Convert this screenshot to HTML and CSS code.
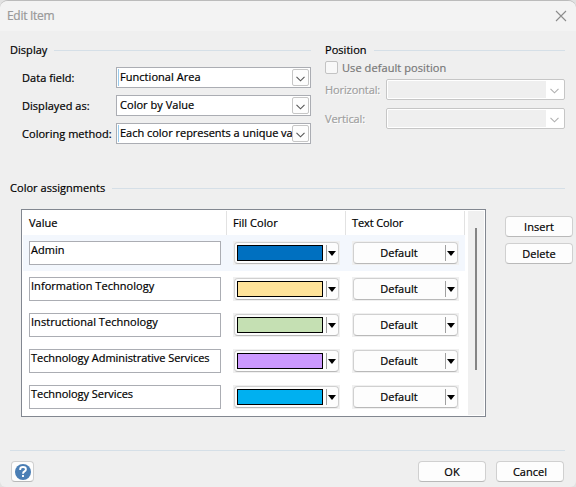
FILE: index.html
```
<!DOCTYPE html>
<html lang="en">
<head>
<meta charset="utf-8">
<title>Edit Item</title>
<link rel="stylesheet" href="styles.css">
</head>
<body>
<div class="dialog">
  <header class="titlebar"><h1>Edit Item</h1>
    <svg class="close" width="12" height="12" viewBox="0 0 12 12"><path d="M1 1l10 10M11 1L1 11"/></svg>
  </header>
  <div class="top">
    <section class="display">
      <h2 class="legend">Display</h2>
      <div class="field"><label>Data field:</label><div class="combo accent"><span>Functional Area</span><i><svg width="9" height="6" viewBox="0 0 9 6"><path d="M.5 .8l4 4 4-4"/></svg></i></div></div>
      <div class="field"><label>Displayed as:</label><div class="combo"><span>Color by Value</span><i><svg width="9" height="6" viewBox="0 0 9 6"><path d="M.5 .8l4 4 4-4"/></svg></i></div></div>
      <div class="field"><label>Coloring method:</label><div class="combo accent"><span class="long">Each color represents a unique value</span><i><svg width="9" height="6" viewBox="0 0 9 6"><path d="M.5 .8l4 4 4-4"/></svg></i></div></div>
    </section>
    <section class="position">
      <h2 class="legend">Position</h2>
      <div class="check"><b></b><span>Use default position</span></div>
      <div class="pfield"><label>Horizontal:</label><div class="combo off"><span></span><i><svg width="9" height="6" viewBox="0 0 9 6"><path d="M.5 .8l4 4 4-4"/></svg></i></div></div>
      <div class="pfield"><label>Vertical:</label><div class="combo off"><span></span><i><svg width="9" height="6" viewBox="0 0 9 6"><path d="M.5 .8l4 4 4-4"/></svg></i></div></div>
    </section>
  </div>
  <h2 class="legend assign">Color assignments</h2>
  <div class="middle">
    <div class="list">
      <div class="rows">
        <div class="head"><span>Value</span><span>Fill Color</span><span>Text Color</span></div>
        <div class="row selected"><div class="input">Admin</div><div class="split"><div><em class="blue"></em><u></u><s></s></div></div><div class="split"><div><span>Default</span><u></u><s></s></div></div></div>
        <div class="row"><div class="input">Information Technology</div><div class="split"><div><em class="yellow"></em><u></u><s></s></div></div><div class="split"><div><span>Default</span><u></u><s></s></div></div></div>
        <div class="row"><div class="input">Instructional Technology</div><div class="split"><div><em class="green"></em><u></u><s></s></div></div><div class="split"><div><span>Default</span><u></u><s></s></div></div></div>
        <div class="row"><div class="input wide">Technology Administrative Services</div><div class="split"><div><em class="purple"></em><u></u><s></s></div></div><div class="split"><div><span>Default</span><u></u><s></s></div></div></div>
        <div class="row"><div class="input wide">Technology Services</div><div class="split"><div><em class="cyan"></em><u></u><s></s></div></div><div class="split"><div><span>Default</span><u></u><s></s></div></div></div>
      </div>
      <div class="scroll"><div class="thumb"></div></div>
    </div>
    <div class="side"><div class="button">Insert</div><div class="button">Delete</div></div>
  </div>
  <footer class="footer">
    <div class="button help"><svg width="16" height="16" viewBox="0 0 16 16"><circle cx="8" cy="8" r="8"/><path d="M5.200 6V5.300C5.200 3.800 6.300 3 8 3s2.900.8 2.900 2.200c0 1.100-.6 1.700-1.400 2.200C8.500 8 8 8.400 8 9.700M8 11v2"/></svg></div>
    <div class="button">OK</div><div class="button">Cancel</div>
  </footer>
</div>
</body>
</html>
```
FILE: styles.css
```
* { box-sizing: border-box; }
body { margin: 0; width: 576px; height: 487px; overflow: hidden; background: #e2e2e2; color: #000; font: 11px/16px "Open Sans", "Noto Sans", sans-serif; letter-spacing: .04px; -webkit-text-stroke: .2px; white-space: nowrap; }
h1, h2 { margin: 0; font: inherit; }
i, em, u, s, b { display: block; }
svg { display: block; fill: none; stroke: #555; stroke-width: 1.1; }
.dialog { height: 487px; overflow: hidden; background: #efefef; border-top: 1px solid #bbb; border-radius: 8px 8px 6px 6px; }
.titlebar { height: 30px; padding: 0 9px 0 7px; display: flex; align-items: center; justify-content: space-between; background: #f3f3f3; }
.titlebar h1 { font-size: 12px; letter-spacing: -.3px; color: #999; }
.close { stroke: #8c8c8c; }
.top { display: flex; gap: 14px; height: 149px; padding: 11px 11px 0 10px; }
.display { width: 301px; }
.position { width: 240px; }
.legend { height: 16px; display: flex; align-items: center; gap: 7px; }
.legend::after { content: ""; flex: 1; height: 1px; background: #d5dfe7; }
.display .legend { margin-bottom: 9px; }
.field { display: flex; height: 21px; margin: 0 0 7px 12px; }
.field label { width: 94px; padding-top: 3px; }
.combo { width: 195px; height: 21px; border: 1px solid #abadb3; background: #fff; display: flex; padding: 1px; }
.combo span { flex: 1; min-width: 0; overflow: hidden; line-height: 16px; padding-left: 2px; }
.combo.accent span { border-left: 1px solid #99ccee; padding-left: 1px; }
.combo .long { letter-spacing: -.02px; }
.combo i { width: 17px; height: 17px; border: 1px solid #c6c6c6; border-radius: 2px; background: #fdfdfd; display: flex; align-items: center; justify-content: center; }
.combo i svg { margin-top: 2px; }
.check { height: 13px; margin: 3px 0 5px; display: flex; align-items: center; color: #787878; gap: 4px; }
.check span { letter-spacing: .08px; }
.check b { width: 13px; height: 13px; border: 1px solid #c3c3c3; border-radius: 2px; background: #f8f8f8; }
.pfield { display: flex; height: 21px; margin-bottom: 8px; color: #a0a0a0; text-shadow: 1px 1px #fff; }
.pfield label { width: 61px; padding-top: 3px; letter-spacing: -.1px; }
.combo.off { width: 179px; border-color: #c6c6c6; border-radius: 2px; }
.off span { background: #efefef; }
.off i { width: 17px; border: 0; background: #fff; }
.off svg { stroke: #b0b0b0; }
.assign { margin: 0 11px 0 10px; }
.middle { display: flex; gap: 19px; padding: 13px 0 0 21px; }
.list { width: 465px; height: 208px; border: 1px solid #828790; padding: 1px; background: #fff; display: flex; justify-content: space-between; }
.rows { width: 442px; }
.head { height: 24px; display: grid; grid-template-columns: 204px 119px 119px; }
.head span { border-right: 1px solid #e2e2e2; padding: 4px 0 0 6px; }
.head span:last-child { letter-spacing: -.1px; }
.row { height: 36px; padding: 6px; display: grid; grid-template-columns: 192px 107px 107px; gap: 12px; }
.selected { background: #f3f7fd; }
.input { height: 24px; border: 1px solid #abadb3; background: #fff; padding: 0 0 0 1px; }
.wide { letter-spacing: -.05px; }
.split { height: 24px; padding: 1px; background: #f0f0f0; }
.split div { height: 22px; display: flex; align-items: center; padding-left: 2px; }
.split div, .button { border: 1px solid #d0d0d0; border-bottom-color: #b9b9b9; border-radius: 4px; background: #fdfdfd; }
.split em { width: 86px; height: 16px; border: 1px solid #000; margin-right: 3px; }
.split span { width: 86px; margin-right: 3px; text-align: center; }
.split u { width: 1px; height: 16px; background: #a0a0a0; margin-right: 1px; }
.split s { border: solid transparent; border-width: 5px 4.500px 0; border-top-color: #000; margin-top: 1px; }
.blue { background: #0070c0; }
.yellow { background: #ffe399; }
.green { background: #c5e0b3; }
.purple { background: #cc99ff; }
.cyan { background: #00b0f0; }
.scroll { width: 16px; background: #f0f0f0; padding: 17px 0 0 7px; }
.thumb { width: 2px; height: 142px; background: #858585; }
.side { padding-top: 7px; display: grid; align-content: start; gap: 6px; }
.button { width: 68px; height: 21px; display: flex; align-items: center; justify-content: center; }
.footer { margin: 33px 11px 0 10px; border-top: 1px solid #d5dfe7; padding: 10px 1px 0; display: flex; gap: 10px; }
.help { width: 23px; margin-right: auto; }
.help circle { fill: #4a7eb5; stroke: none; }
.help path { stroke: #fff; stroke-width: 1.900; }
```
